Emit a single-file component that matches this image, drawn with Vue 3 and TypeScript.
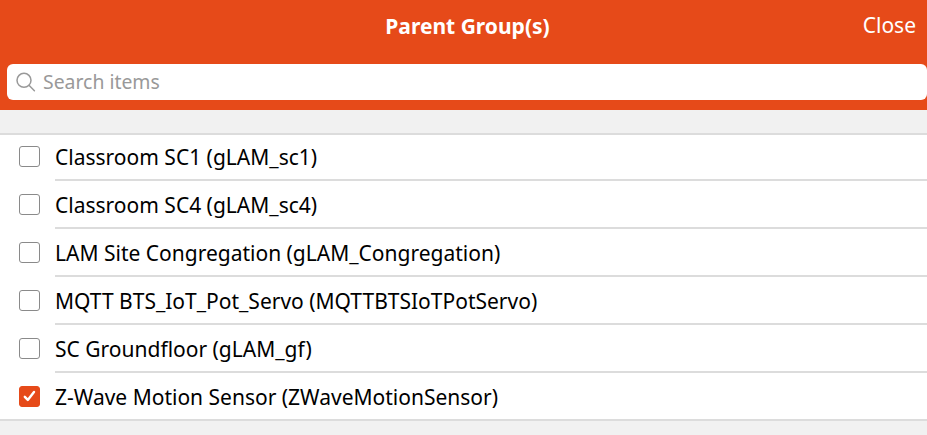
<script setup lang="ts">
interface Item { label: string; checked: boolean }
const items: Item[] = [
  { label: 'Classroom SC1 (gLAM_sc1)', checked: false },
  { label: 'Classroom SC4 (gLAM_sc4)', checked: false },
  { label: 'LAM Site Congregation (gLAM_Congregation)', checked: false },
  { label: 'MQTT BTS_IoT_Pot_Servo (MQTTBTSIoTPotServo)', checked: false },
  { label: 'SC Groundfloor (gLAM_gf)', checked: false },
  { label: 'Z-Wave Motion Sensor (ZWaveMotionSensor)', checked: true },
]
</script>

<template>
  <div class="page">
    <header class="header">
      <div class="bar">
        <span class="title">Parent Group(s)</span>
        <span class="close">Close</span>
      </div>
      <div class="search">
        <svg class="glass" width="20" height="20" viewBox="0 0 20 20" fill="none" stroke="#999" stroke-width="1.5">
          <circle cx="8" cy="8.3" r="7" />
          <path d="M13 13.3 L18.4 18.8" stroke-linecap="round" />
        </svg>
        <span class="placeholder">Search items</span>
      </div>
    </header>
    <div class="band"></div>
    <ul class="list">
      <li v-for="item in items" :key="item.label" class="row">
        <span class="box" :class="{ checked: item.checked }">
          <svg v-if="item.checked" width="19" height="19" viewBox="0 0 19 19" fill="none" stroke="#fff" stroke-width="2.4" stroke-linecap="round" stroke-linejoin="round">
            <path d="M4.8 9.8 L7.8 12.9 L14 5" />
          </svg>
        </span>
        <span class="label">{{ item.label }}</span>
      </li>
    </ul>
  </div>
</template>

<style>
html, body { margin: 0; background: #f1f1f1; overflow: hidden; }
</style>

<style scoped>
.page {
  width: 927px;
  height: 435px;
  overflow: hidden;
  font-family: "Noto Sans", sans-serif;
  background: #f1f1f1;
}
.header {
  height: 110px;
  background: #e64a19;
  padding-left: 7px;
  display: flex;
  flex-direction: column;
}
.bar {
  height: 57px;
  box-sizing: border-box;
  margin-left: -7px;
  padding: 0 0 6px 8px;
  display: flex;
  align-items: center;
  justify-content: center;
  position: relative;
  color: #fff;
  flex: none;
}
.title { font-size: 21px; font-weight: 700; }
.close {
  position: absolute;
  right: 11px;
  top: 11px;
  font-size: 21px;
  line-height: 28px;
}
.search {
  margin-top: 7px;
  height: 36px;
  background: #fff;
  border-radius: 6px;
  display: flex;
  align-items: center;
  padding-left: 9px;
  color: #999;
  flex: none;
}
.glass { flex: none; margin-right: 7px; }
.placeholder { font-size: 19.4px; margin-bottom: 2px; }
.band { height: 23px; background: #f1f1f1; }
.list {
  list-style: none;
  margin: 0;
  padding: 0;
  background: #fff;
  box-shadow: inset 0 2px #dcdcdc;
}
.row {
  height: 48px;
  box-sizing: border-box;
  padding: 0 0 2px 19px;
  display: flex;
  align-items: center;
  position: relative;
}
.row::after {
  content: "";
  position: absolute;
  left: 55px;
  right: 0;
  bottom: 0;
  height: 2px;
  background: #dcdcdc;
}
.row:last-child::after { left: 0; }
.box {
  width: 21px;
  height: 21px;
  box-sizing: border-box;
  border: 1px solid #8a8a8a;
  border-radius: 3px;
  margin-right: 15px;
  display: flex;
  align-items: center;
  justify-content: center;
  flex: none;
  background: #fff;
}
.box.checked { background: #e64a19; border-color: #e64a19; }
.label { font-size: 21px; color: #000; white-space: nowrap; margin-top: 2px; }
</style>
